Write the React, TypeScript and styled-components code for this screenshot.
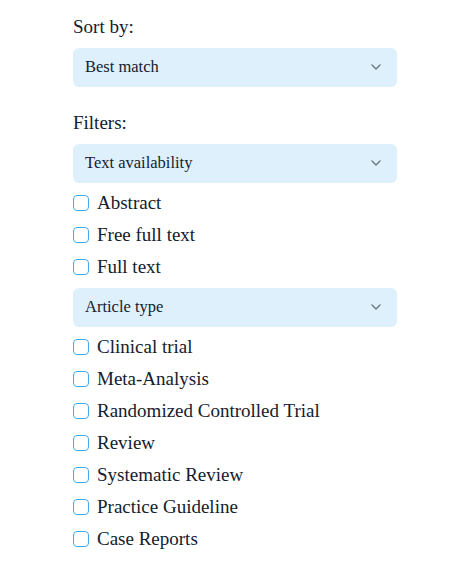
import styled, { createGlobalStyle } from "styled-components";

const GlobalStyle = createGlobalStyle`
  html, body {
    margin: 0;
    padding: 0;
    background: #ffffff;
  }
  body {
    font-family: "Liberation Serif", "DejaVu Serif", serif;
    color: #14202e;
  }
`;

const textAvailability = ["Abstract", "Free full text", "Full text"];
const articleTypes = [
  "Clinical trial",
  "Meta-Analysis",
  "Randomized Controlled Trial",
  "Review",
  "Systematic Review",
  "Practice Guideline",
  "Case Reports",
];

function Chevron() {
  return (
    <svg width="10" height="6" viewBox="0 0 10 6" fill="none">
      <path d="M1 1l4 4 4-4" stroke="#6b7580" strokeWidth="1.4" strokeLinecap="round" strokeLinejoin="round" />
    </svg>
  );
}

function Dropdown({ label }: { label: string }) {
  return (
    <Select type="button">
      <span>{label}</span>
      <Chevron />
    </Select>
  );
}

function CheckList({ items }: { items: string[] }) {
  return (
    <List>
      {items.map((item) => (
        <Option key={item}>
          <Box type="checkbox" />
          <span>{item}</span>
        </Option>
      ))}
    </List>
  );
}

export default function App() {
  return (
    <>
      <GlobalStyle />
      <Panel>
        <Section>
          <Label>Sort by:</Label>
          <Dropdown label="Best match" />
        </Section>
        <Section>
          <Label>Filters:</Label>
          <Dropdown label="Text availability" />
          <CheckList items={textAvailability} />
          <Dropdown label="Article type" />
          <CheckList items={articleTypes} />
        </Section>
      </Panel>
    </>
  );
}

const Panel = styled.aside`
  width: 324px;
  padding: 15px 0 0 73px;
  display: flex;
  flex-direction: column;
  gap: 24px;
`;

const Section = styled.section`
  display: flex;
  flex-direction: column;
`;

const Label = styled.h3`
  margin: 0 0 9px;
  font-size: 19px;
  font-weight: 400;
  line-height: 24px;
  color: #14202e;
`;

const Select = styled.button`
  display: flex;
  align-items: center;
  justify-content: space-between;
  height: 39px;
  padding: 0 16px 1px 12px;
  border: none;
  border-radius: 6px;
  background: #dff0fd;
  font-family: inherit;
  font-size: 16.5px;
  color: #14202e;
  text-align: left;
  cursor: pointer;
`;

const List = styled.div`
  display: flex;
  flex-direction: column;
  padding: 4px 0 5px;
`;

const Option = styled.label`
  display: flex;
  align-items: center;
  gap: 8px;
  height: 32px;
  font-size: 19px;
  color: #14202e;
  cursor: pointer;
`;

const Box = styled.input`
  appearance: none;
  margin: 0;
  width: 16px;
  height: 16px;
  border: 1.5px solid #3eaef0;
  border-radius: 4px;
  background: #ffffff;
  flex-shrink: 0;
`;
